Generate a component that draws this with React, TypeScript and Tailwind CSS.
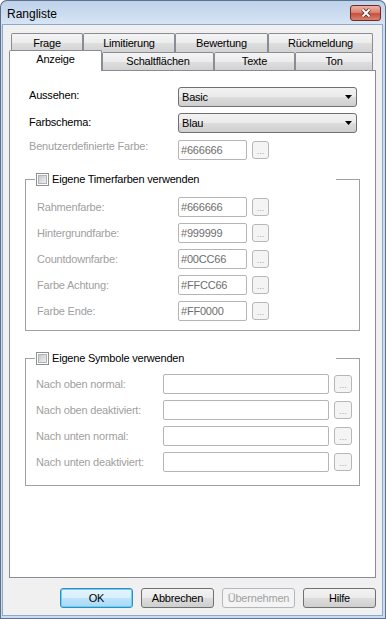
import React from "react";

// Vista-Look Verlaeufe fuer Reiter und Knoepfe
const tabBg = "bg-[linear-gradient(#f4f4f4,#ececec_50%,#dfdfdf_50%,#d2d2d2)]";
const btnBg = "bg-[linear-gradient(#f2f2f2,#ebebeb_50%,#dddddd_50%,#cfcfcf)]";

function CheckBox() {
  return (
    <span className="flex h-[13px] w-[13px] shrink-0 border border-[#8e8f8f] bg-white p-[1px]">
      <span className="flex-1 border border-[#b0b4ba] bg-[linear-gradient(135deg,#c6cad0,#eeeeee)]" />
    </span>
  );
}

function Dots({ w }: { w: string }) {
  return (
    <div
      className={`flex h-[18px] ${w} shrink-0 items-end justify-center rounded-[3px] border border-[#b4b8bb] bg-[#f4f4f4] pb-[2px] text-[9px] leading-none tracking-normal text-[#a6a6a6]`}
    >
      ...
    </div>
  );
}

function ColorField({ value }: { value: string }) {
  return (
    <div className="flex items-center gap-[5px]">
      <div className="flex h-[20px] w-[69px] items-center rounded-[2px] border border-[#b5b5b5] bg-white pl-[2px] text-[#6d6d6d]">
        {value}
      </div>
      <Dots w="w-[17px]" />
    </div>
  );
}

function Select({ value }: { value: string }) {
  return (
    <div
      className={`flex h-[20px] w-[179px] items-center justify-between rounded-[3px] border border-[#707070] ${btnBg} pl-[3px] pr-[4px]`}
    >
      <span>{value}</span>
      <svg width="7" height="4" viewBox="0 0 7 4">
        <polygon points="0,0 7,0 3.5,4" fill="#000" />
      </svg>
    </div>
  );
}

function GroupBox({
  title,
  children,
  body,
}: {
  title: string;
  children: React.ReactNode;
  body: string;
}) {
  return (
    <div className="flex flex-col">
      <div className="flex h-[13px]">
        <div className="mt-[6px] w-[10px] border-l border-t border-[#a0a0a0]" />
        <div className="ml-[1px] flex w-[300px] items-center gap-[3px]">
          <CheckBox />
          <span>{title}</span>
        </div>
        <div className="mt-[6px] flex-1 border-r border-t border-[#a0a0a0]" />
      </div>
      <div className={`flex flex-col gap-[6px] border-x border-b border-[#a0a0a0] ${body}`}>
        {children}
      </div>
    </div>
  );
}

const timerRows = [
  ["Rahmenfarbe:", "#666666"],
  ["Hintergrundfarbe:", "#999999"],
  ["Countdownfarbe:", "#00CC66"],
  ["Farbe Achtung:", "#FFCC66"],
  ["Farbe Ende:", "#FF0000"],
];

const symbolRows = [
  "Nach oben normal:",
  "Nach oben deaktiviert:",
  "Nach unten normal:",
  "Nach unten deaktiviert:",
];

export default function App() {
  return (
    <div className="flex h-[619px] w-[386px] flex-col rounded-t-[7px] bg-[linear-gradient(#bcd1ea,#d8e5f4_25px,#cadcf1_25px)] font-['Liberation_Sans',Arial,sans-serif] text-[11px] leading-[13px] tracking-[-0.2px] text-black shadow-[inset_0_0_0_1px_#5f7189]">
      {/* Titelleiste */}
      <div className="flex h-[25px] items-start justify-between pl-[7px] pr-[5px]">
        <span className="pt-[7px] text-[12px] leading-[14px] tracking-normal">Rangliste</span>
        <div className="mt-[5px] flex h-[16px] w-[31px] items-center justify-center rounded-[3px] border border-[#6f2b22] bg-[linear-gradient(#eab3a6,#dc8574_45%,#c7503f_55%,#d9836f)]">
          <svg width="12" height="10" viewBox="0 0 12 10">
            <path d="M2.5 1.5 L9.5 8.5 M9.5 1.5 L2.5 8.5" stroke="#5b2219" strokeWidth="3.6" />
            <path d="M2.5 1.5 L9.5 8.5 M9.5 1.5 L2.5 8.5" stroke="#fff" strokeWidth="2" />
          </svg>
        </div>
      </div>

      <div className="flex flex-1 pb-[4px] pl-[3px] pr-[4px]">
        <div className="flex flex-1 flex-col bg-[#f0f0f0] px-[6px] pt-[8px] shadow-[0_0_0_1px_#8ea9cc]">
          {/* Reiter, hintere Reihe */}
          <div className="flex h-[19px] pl-[2px]">
            {[
              ["Frage", "w-[72px]"],
              ["Limitierung", "w-[92px]"],
              ["Bewertung", "w-[93px]"],
              ["Rückmeldung", "w-[105px]"],
            ].map(([t, w]) => (
              <div
                key={t}
                className={`flex h-full ${w} justify-center rounded-t-[2px] border border-b-0 border-[#898c95] ${tabBg} pt-[3px]`}
              >
                {t}
              </div>
            ))}
          </div>
          {/* Reiter, vordere Reihe */}
          <div className="relative z-10 -mb-[1px] -mt-[2px] flex h-[21px] items-end">
            <div className="flex h-[21px] w-[93px] justify-center rounded-t-[2px] border border-b-0 border-[#898c95] bg-white pt-[2px]">
              Anzeige
            </div>
            {[
              ["Schaltflächen", "w-[112px]"],
              ["Texte", "w-[81px]"],
              ["Ton", "w-[78px]"],
            ].map(([t, w]) => (
              <div
                key={t}
                className={`mb-[1px] flex h-[18px] ${w} justify-center rounded-t-[2px] border border-b-0 border-[#898c95] ${tabBg} pt-[2px]`}
              >
                {t}
              </div>
            ))}
          </div>

          {/* Reiterseite */}
          <div className="flex h-[508px] flex-col border border-[#898c95] bg-white px-[15px] pt-[16px]">
            <div className="flex flex-col pl-[4px]">
              <div className="flex h-[20px] items-start">
                <span className="w-[149px] shrink-0 pt-[2px]">Aussehen:</span>
                <Select value="Basic" />
              </div>
              <div className="mt-[6px] flex h-[20px] items-start">
                <span className="w-[149px] shrink-0 pt-[3px]">Farbschema:</span>
                <Select value="Blau" />
              </div>
              <div className="mt-[7px] flex h-[20px] items-start">
                <span className="w-[149px] shrink-0 text-[#a0a0a0]">Benutzerdefinierte Farbe:</span>
                <ColorField value="#666666" />
              </div>
            </div>

            <div className="mt-[13px]">
              <GroupBox title="Eigene Timerfarben verwenden" body="pl-[11px] pt-[11px] pb-[9px]">
                {timerRows.map(([label, value]) => (
                  <div key={label} className="flex h-[20px] items-center">
                    <span className="w-[141px] shrink-0 text-[#a0a0a0]">{label}</span>
                    <ColorField value={value} />
                  </div>
                ))}
              </GroupBox>
            </div>

            <div className="mt-[21px]">
              <GroupBox title="Eigene Symbole verwenden" body="pl-[10px] pt-[9px] pb-[13px]">
                {symbolRows.map((label) => (
                  <div key={label} className="flex h-[20px] items-center">
                    <span className="w-[127px] shrink-0 text-[#a0a0a0]">{label}</span>
                    <div className="h-[20px] w-[166px] rounded-[2px] border border-[#b5b5b5] bg-white" />
                    <div className="ml-[5px]">
                      <Dots w="w-[18px]" />
                    </div>
                  </div>
                ))}
              </GroupBox>
            </div>
          </div>

          {/* Schaltflaechen unten */}
          <div className="mt-[10px] flex justify-end gap-[8px]">
            <button className="h-[20px] w-[73px] rounded-[3px] border border-[#3c86c4] bg-[linear-gradient(#e6f5fd,#d6eefc_50%,#bde4fa_50%,#a8d9f6)] shadow-[inset_0_0_0_1px_#5fd6f8]">
              OK
            </button>
            <button className={`h-[20px] w-[73px] rounded-[3px] border border-[#707070] ${btnBg}`}>
              Abbrechen
            </button>
            <button className="h-[20px] w-[73px] rounded-[3px] border border-[#b4b8bb] bg-[#f4f4f4] text-[#a0a0a0]">
              Übernehmen
            </button>
            <button className={`h-[20px] w-[73px] rounded-[3px] border border-[#707070] ${btnBg}`}>
              Hilfe
            </button>
          </div>
        </div>
      </div>
    </div>
  );
}
